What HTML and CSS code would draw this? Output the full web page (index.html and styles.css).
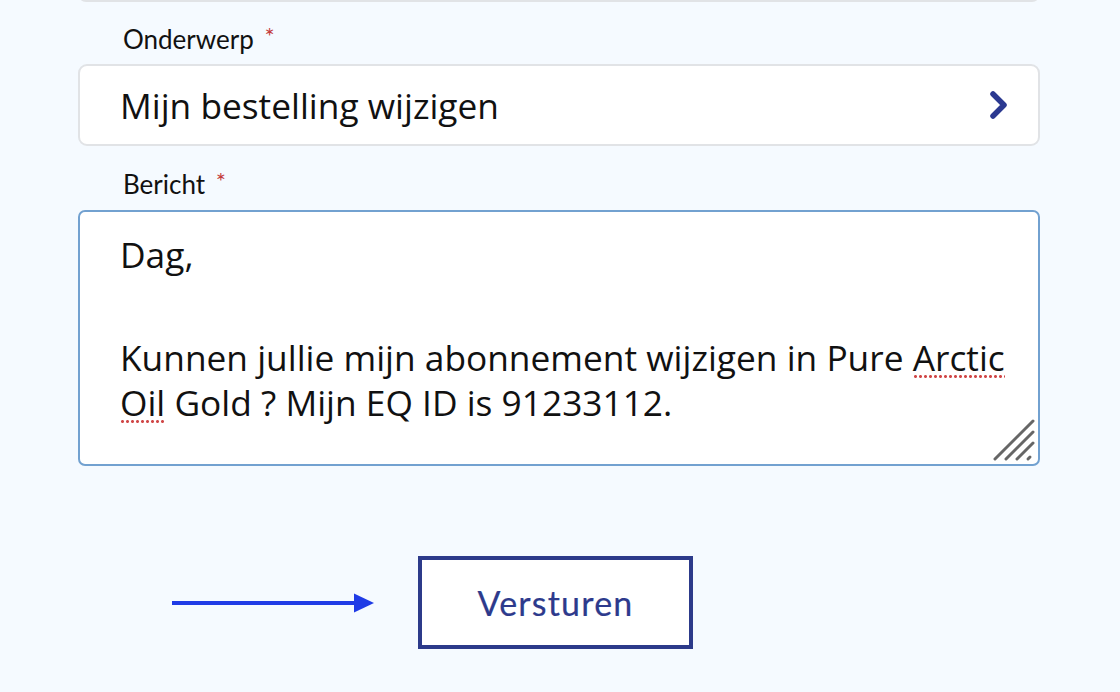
FILE: index.html
```html
<!DOCTYPE html>
<html lang="nl">
<head>
<meta charset="utf-8">
<link rel="stylesheet" href="styles.css">
</head>
<body>
<div class="page">
  <div class="prev-field"></div>
  <form class="form">
    <div class="label">Onderwerp <span class="req">*</span></div>
    <div class="select">
      <span class="select-value">Mijn bestelling wijzigen</span>
      <svg class="chevron" width="20" height="30" viewBox="0 0 20 30"><path d="M4 4 L15 15 L4 26" fill="none" stroke="#2b3990" stroke-width="5.5" stroke-linecap="round" stroke-linejoin="round"/></svg>
    </div>
    <div class="label label-second">Bericht <span class="req">*</span></div>
    <div class="textarea">
      <p class="greeting">Dag,</p>
      <p class="message">Kunnen jullie mijn abonnement wijzigen in Pure <span class="spell">Arctic</span> <span class="spell">Oil</span> Gold ? Mijn EQ ID is 91233112.</p>
      <svg class="grip" width="44" height="44" viewBox="0 0 44 44"><g stroke="#666" stroke-width="3" stroke-linecap="round"><path d="M3 41 L41 3"/><path d="M14 41 L41 14"/><path d="M25 41 L41 25"/><path d="M36 41 L38 39"/></g></svg>
    </div>
    <div class="actions">
      <svg class="arrow" width="204" height="22" viewBox="0 0 204 22"><path d="M0 11 H186" stroke="#1f3be6" stroke-width="4"/><path d="M182 1.5 L202 11 L182 20.5 Z" fill="#1f3be6"/></svg>
      <button type="button" class="submit">Versturen</button>
    </div>
  </form>
</div>
</body>
</html>
```

FILE: styles.css
```css
* { box-sizing: border-box; }
html, body {
  margin: 0;
  padding: 0;
  background: #f5faff;
  width: 1120px;
  height: 692px;
  overflow: hidden;
}
.page {
  padding-left: 78px;
  width: 1040px;
}
.prev-field {
  height: 22px;
  margin-top: -20px;
  background: #fff;
  border: 2px solid #e1e3e6;
  border-radius: 8px;
}
.form {
  display: flex;
  flex-direction: column;
}
.label {
  font-family: Lato, "Liberation Sans", sans-serif;
  font-size: 26px;
  color: #111;
  padding-left: 45px;
  line-height: 30px;
  padding-top: 19px;
  height: 62px;
}
.label-second {
  height: 64px;
  padding-top: 20px;
}
.req {
  color: #c43c3c;
  font-size: 24px;
  vertical-align: 4px;
  margin-left: 4px;
}
.select {
  height: 82px;
  background: #fff;
  border: 2px solid #e1e3e6;
  border-radius: 9px;
  display: flex;
  align-items: center;
  justify-content: space-between;
  padding: 0 29px 0 40px;
}
.select-value {
  font-family: "Open Sans", sans-serif;
  font-size: 35.3px;
  color: #111;
}
.chevron { display: block; }
.textarea {
  position: relative;
  height: 256px;
  background: #fff;
  border: 2px solid #72a1d0;
  border-radius: 7px;
  padding: 20px 30px 0 40px;
  font-family: "Open Sans", sans-serif;
  font-size: 35.3px;
  color: #111;
}
.textarea p { margin: 0; line-height: 45px; }
.greeting { margin-bottom: 58px !important; }
.spell {
  background-image: radial-gradient(circle, #d04848 1.2px, transparent 1.7px);
  background-size: 5px 5px;
  background-repeat: repeat-x;
  background-position: 0 calc(100% - 2px);
}
.grip {
  position: absolute;
  right: 2px;
  bottom: 2px;
}
.actions {
  display: flex;
  align-items: center;
  margin-top: 90px;
  padding-left: 94px;
}
.arrow { display: block; margin-right: 42px; }
.submit {
  width: 275px;
  height: 93px;
  background: #fff;
  border: 4px solid #2c3a8a;
  border-radius: 0;
  font-family: Lato, "Liberation Sans", sans-serif;
  font-size: 34px;
  letter-spacing: 1.2px;
  color: #2d3a8c;
  padding: 0;
  -webkit-text-stroke: 0.2px #2d3a8c;
}
```
